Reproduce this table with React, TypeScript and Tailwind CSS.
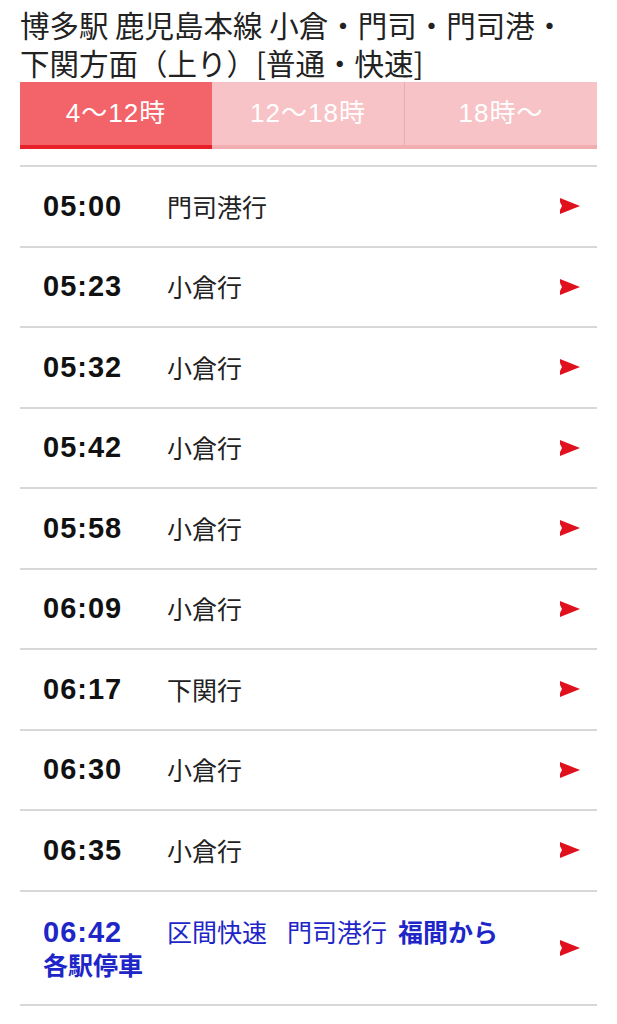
const JP = { fontFamily: '"Noto Sans CJK JP", "Noto Sans", sans-serif' };
const LATIN_JP = { fontFamily: '"Liberation Sans", "Noto Sans CJK JP", sans-serif' };

const TABS = [
  { label: '4〜12時', active: true },
  { label: '12〜18時', active: false },
  { label: '18時〜', active: false },
];

const ROWS = [
  { time: '05:00', dest: '門司港行' },
  { time: '05:23', dest: '小倉行' },
  { time: '05:32', dest: '小倉行' },
  { time: '05:42', dest: '小倉行' },
  { time: '05:58', dest: '小倉行' },
  { time: '06:09', dest: '小倉行' },
  { time: '06:17', dest: '下関行' },
  { time: '06:30', dest: '小倉行' },
  { time: '06:35', dest: '小倉行' },
];

function Arrow() {
  return (
    <svg width="20" height="16" viewBox="0 0 20 16" className="mr-[17px] shrink-0">
      <polygon points="0,0 20,8 0,16 0,12 2,8 0,4" fill="#e0101c" />
    </svg>
  );
}

function TimeText({ children, blue }: { children: string; blue?: boolean }) {
  return (
    <span
      className={`text-[29px] font-bold tracking-[1px] ${blue ? 'text-[#1e26c8]' : 'text-[#111]'}`}
      style={{ fontFamily: '"Liberation Sans", Arial, sans-serif' }}
    >
      {children}
    </span>
  );
}

export default function App() {
  return (
    <div className="min-h-[1024px] bg-white px-5" style={JP}>
      <h1 className="pt-[5px] text-[29.5px] leading-[38px] font-normal text-[#222]">
        博多駅 鹿児島本線 小倉・門司・門司港・
        <span className="whitespace-nowrap">下関方面（上り）</span>[普通・快速]
      </h1>

      <div className="mt-[1px] flex h-[67px]">
        {TABS.map((t, i) => (
          <div
            key={t.label}
            className={`flex flex-1 items-center justify-center border-b-4 text-[26px] tracking-[1px] text-white ${
              t.active
                ? 'border-[#e8202a] bg-[#f3646a]'
                : 'border-[#f1aeb1] bg-[#f8c3c6]'
            } ${i === 2 ? 'border-l border-l-[#f0a9ad]' : ''}`}
            style={LATIN_JP}
          >
            {t.label}
          </div>
        ))}
      </div>

      <div className="mt-[16px] border-t-2 border-[#d8d8d8]">
        {ROWS.map((r) => (
          <div
            key={r.time}
            className="flex h-[80.5px] items-center border-b-2 border-[#d8d8d8] pl-[23px]"
          >
            <div className="w-[124px]">
              <TimeText>{r.time}</TimeText>
            </div>
            <div className="flex-1 text-[25px] text-[#222]">{r.dest}</div>
            <Arrow />
          </div>
        ))}

        <div className="flex h-[114px] items-center border-b-2 border-[#d8d8d8] pl-[23px]">
          <div className="flex-1 text-[25px] leading-[32px] text-[#1e26c8]">
            <span className="inline-block w-[124px]">
              <TimeText blue>06:42</TimeText>
            </span>
            <span className="mr-[20px]">区間快速</span>
            <span className="mr-[11px]">門司港行</span>
            <b className="font-bold">福間から</b>
            <br />
            <b className="font-bold">各駅停車</b>
          </div>
          <Arrow />
        </div>
      </div>
    </div>
  );
}
